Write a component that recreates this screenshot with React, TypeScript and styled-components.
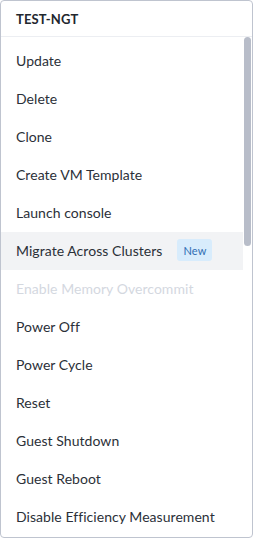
import React from "react";
import styled, { createGlobalStyle } from "styled-components";

const Global = createGlobalStyle`
  html, body { margin: 0; padding: 0; background: #ffffff; }
  body { font-family: Lato, "Open Sans", Arial, sans-serif; }
  * { box-sizing: border-box; }
`;

const Panel = styled.div`
  width: 253px;
  height: 538px;
  border: 1px solid #bfc4cf;
  border-radius: 4px;
  background: #fff;
  display: flex;
  flex-direction: column;
  overflow: hidden;
`;

const Header = styled.div`
  height: 36px;
  flex: none;
  display: flex;
  align-items: center;
  padding: 0 15px;
  border-bottom: 1px solid #eceef2;
  font-size: 13px;
  font-weight: 700;
  color: #22272e;
  letter-spacing: 0.1px;
`;

const Body = styled.div`
  flex: 1;
  display: flex;
  min-height: 0;
`;

const List = styled.div`
  flex: 1;
  overflow: hidden;
  padding-top: 5px;
`;

const Track = styled.div`
  width: 9px;
  flex: none;
  padding: 0 1px 0 1px;
`;

const Thumb = styled.div`
  height: 209px;
  border-radius: 4px;
  background: #b8bdc9;
`;

const Item = styled.div<{ $disabled?: boolean; $hover?: boolean }>`
  height: 38px;
  display: flex;
  align-items: center;
  padding: 0 15px 2px;
  font-size: 14px;
  letter-spacing: 0.05px;
  color: ${(p) => (p.$disabled ? "#d4d8df" : "#2b3038")};
  background: ${(p) => (p.$hover ? "#f2f3f5" : "transparent")};
  white-space: nowrap;
`;

const Badge = styled.span`
  margin-left: 15px;
  height: 22px;
  padding: 0 6px;
  display: inline-flex;
  align-items: center;
  border-radius: 3px;
  background: #d8ecfc;
  color: #2f6db3;
  font-size: 11px;
  letter-spacing: 0.1px;
`;

const items: { label: string; disabled?: boolean; hover?: boolean; badge?: string }[] = [
  { label: "Update" },
  { label: "Delete" },
  { label: "Clone" },
  { label: "Create VM Template" },
  { label: "Launch console" },
  { label: "Migrate Across Clusters", hover: true, badge: "New" },
  { label: "Enable Memory Overcommit", disabled: true },
  { label: "Power Off" },
  { label: "Power Cycle" },
  { label: "Reset" },
  { label: "Guest Shutdown" },
  { label: "Guest Reboot" },
  { label: "Disable Efficiency Measurement" },
];

export default function App() {
  return (
    <>
      <Global />
      <Panel>
        <Header>TEST-NGT</Header>
        <Body>
          <List>
            {items.map((it) => (
              <Item key={it.label} $disabled={it.disabled} $hover={it.hover}>
                {it.label}
                {it.badge && <Badge>{it.badge}</Badge>}
              </Item>
            ))}
          </List>
          <Track>
            <Thumb />
          </Track>
        </Body>
      </Panel>
    </>
  );
}
